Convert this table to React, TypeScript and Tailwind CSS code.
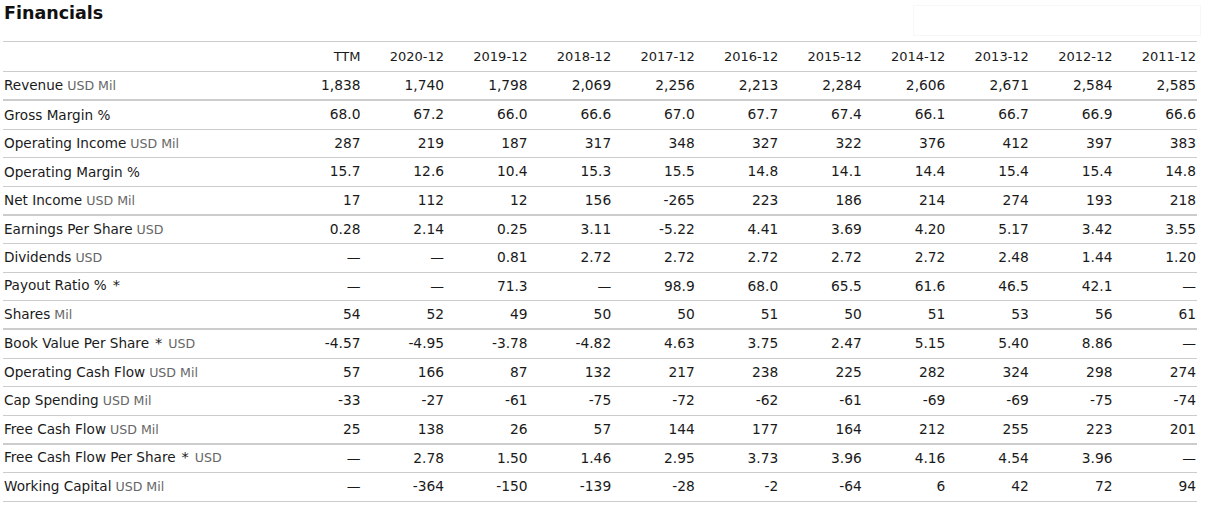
const years = [
  "TTM",
  "2020-12",
  "2019-12",
  "2018-12",
  "2017-12",
  "2016-12",
  "2015-12",
  "2014-12",
  "2013-12",
  "2012-12",
  "2011-12",
];

const rows = [
  { label: "Revenue", unit: "USD Mil", thick: true, values: ["1,838", "1,740", "1,798", "2,069", "2,256", "2,213", "2,284", "2,606", "2,671", "2,584", "2,585"] },
  { label: "Gross Margin %", unit: "", values: ["68.0", "67.2", "66.0", "66.6", "67.0", "67.7", "67.4", "66.1", "66.7", "66.9", "66.6"] },
  { label: "Operating Income", unit: "USD Mil", values: ["287", "219", "187", "317", "348", "327", "322", "376", "412", "397", "383"] },
  { label: "Operating Margin %", unit: "", values: ["15.7", "12.6", "10.4", "15.3", "15.5", "14.8", "14.1", "14.4", "15.4", "15.4", "14.8"] },
  { label: "Net Income", unit: "USD Mil", thick: true, values: ["17", "112", "12", "156", "-265", "223", "186", "214", "274", "193", "218"] },
  { label: "Earnings Per Share", unit: "USD", values: ["0.28", "2.14", "0.25", "3.11", "-5.22", "4.41", "3.69", "4.20", "5.17", "3.42", "3.55"] },
  { label: "Dividends", unit: "USD", values: ["—", "—", "0.81", "2.72", "2.72", "2.72", "2.72", "2.72", "2.48", "1.44", "1.20"] },
  { label: "Payout Ratio %", star: true, unit: "", values: ["—", "—", "71.3", "—", "98.9", "68.0", "65.5", "61.6", "46.5", "42.1", "—"] },
  { label: "Shares", unit: "Mil", thick: true, values: ["54", "52", "49", "50", "50", "51", "50", "51", "53", "56", "61"] },
  { label: "Book Value Per Share", star: true, unit: "USD", values: ["-4.57", "-4.95", "-3.78", "-4.82", "4.63", "3.75", "2.47", "5.15", "5.40", "8.86", "—"] },
  { label: "Operating Cash Flow", unit: "USD Mil", values: ["57", "166", "87", "132", "217", "238", "225", "282", "324", "298", "274"] },
  { label: "Cap Spending", unit: "USD Mil", values: ["-33", "-27", "-61", "-75", "-72", "-62", "-61", "-69", "-69", "-75", "-74"] },
  { label: "Free Cash Flow", unit: "USD Mil", thick: true, values: ["25", "138", "26", "57", "144", "177", "164", "212", "255", "223", "201"] },
  { label: "Free Cash Flow Per Share", star: true, unit: "USD", values: ["—", "2.78", "1.50", "1.46", "2.95", "3.73", "3.96", "4.16", "4.54", "3.96", "—"] },
  { label: "Working Capital", unit: "USD Mil", values: ["—", "-364", "-150", "-139", "-28", "-2", "-64", "6", "42", "72", "94"] },
];

export default function App() {
  return (
    <div className="min-h-[505px] w-[1213px] bg-white text-[#1a1a1a] font-['Verdana','DejaVu_Sans',sans-serif]">
      <div className="flex items-start justify-between h-[41px] pl-[4px] pr-[13px]">
        <h1 className="mt-[3px] text-[17.5px] leading-[20px] font-bold text-[#111]">
          Financials
        </h1>
        <div className="mt-[6px] w-[286px] h-[29px] bg-white shadow-[0_0_0_1px_#f7f7f7]" />
      </div>

      <div className="ml-[3px] w-[1194px] border-t border-[#cccccc]">
        <div className="grid grid-cols-[275px_repeat(11,1fr)] h-[30px] items-center border-b border-[#cccccc] text-[13px]">
          <div />
          {years.map((y) => (
            <div key={y} className="text-right pr-[1px]">
              {y}
            </div>
          ))}
        </div>

        {rows.map((r) => (
          <div
            key={r.label}
            className={
              r.thick
                ? "grid grid-cols-[275px_repeat(11,1fr)] h-[29px] items-center border-b-2 border-[#cccccc] text-[13.8px]"
                : "grid grid-cols-[275px_repeat(11,1fr)] h-[28.5px] items-center border-b border-[#cccccc] text-[13.8px]"
            }
          >
            <div className="pl-[1px] whitespace-nowrap text-[13.6px]">
              {r.label}
              {r.star && <span className="ml-[6px] mr-[2px] text-[14.5px]">*</span>}
              {r.unit && (
                <span className="ml-[4px] text-[12.6px] text-[#666]">{r.unit}</span>
              )}
            </div>
            {r.values.map((v, i) => (
              <div key={i} className="text-right pr-[1px]">
                {v}
              </div>
            ))}
          </div>
        ))}
      </div>
    </div>
  );
}
